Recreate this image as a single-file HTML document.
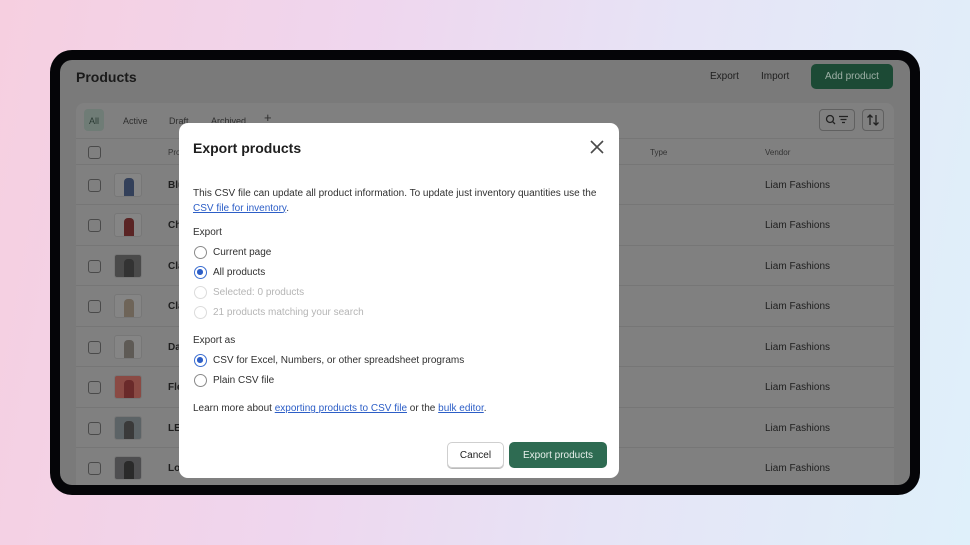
<!DOCTYPE html>
<html><head><meta charset="utf-8"><style>
*{box-sizing:border-box;margin:0;padding:0}
body{width:970px;height:545px;overflow:hidden;font-family:"Liberation Sans",sans-serif;background:linear-gradient(100deg,#f6cfe0 0%,#efd6ee 35%,#e6e4f6 65%,#dff0fa 100%);position:relative}
.frame{position:absolute;left:50px;top:50px;width:870px;height:445px;background:#050508;border-radius:22px}
.screen{position:absolute;left:60px;top:60px;width:850px;height:425px;background:#7a7a7a;border-radius:12px;overflow:hidden}
.abs{position:absolute}
.card{position:absolute;left:16px;top:43px;width:818px;height:400px;background:#808080;border-radius:8px}
.row{position:absolute;left:0;width:818px;border-top:1px solid #767676}
.cb{position:absolute;left:12px;width:13px;height:13px;border:1.3px solid #4a4a4a;border-radius:3px}
.th{position:absolute;left:38px;width:28px;height:24px;border-radius:3px;border:1px solid #777;background:#858585;overflow:hidden}
.th i{position:absolute;left:9px;top:4px;width:10px;height:18px;border-radius:4px 4px 0 0}
.txt{font-size:10px;color:#1e1e1e}
.tab{position:absolute;top:13px;font-size:9px;color:#2e2e2e}
.modal{position:absolute;left:179px;top:123px;width:440px;height:355px;background:#fff;border-radius:9px;color:#303030;font-size:10px}
.radio{position:absolute;left:15px;width:13px;height:13px;border:1.3px solid #8a8a8a;border-radius:50%}
.radio.on{border:1.3px solid #3b6ed1}
.radio.on::after{content:"";position:absolute;left:2.4px;top:2.4px;width:5.6px;height:5.6px;border-radius:50%;background:#2c5ec7}
.radio.dis{border-color:#dcdcdc}
.lab{position:absolute;left:34px;font-size:10px}
a{color:#2c5ec7;text-decoration:underline}
.btn{position:absolute;display:flex;align-items:center;justify-content:center;border-radius:5px}
</style></head><body>
<div class="frame"></div>
<div class="screen">
  <div class="abs" style="left:16px;top:9px;font-size:14px;font-weight:bold;color:#1a1a1a">Products</div>
  <div class="abs txt" style="left:650px;top:11px">Export</div>
  <div class="abs txt" style="left:701px;top:11px">Import</div>
  <div class="btn" style="left:751px;top:4px;width:82px;height:25px;background:#1c4a35;color:#9fb0a7;font-size:10px">Add product</div>
  <div class="card">
    <div class="abs" style="left:8px;top:6px;width:20px;height:22px;background:#6f7c76;border-radius:4px"></div>
    <div class="tab" style="left:13px;color:#2a3a33">All</div>
    <div class="tab" style="left:47px">Active</div>
    <div class="tab" style="left:93px">Draft</div>
    <div class="tab" style="left:135px">Archived</div>
    <div class="abs" style="left:188px;top:7px;font-size:13px;color:#2e2e2e">+</div>
    <div class="abs" style="left:743px;top:6px;width:36px;height:22px;border:1px solid #606060;border-radius:4px">
      <svg width="34" height="20" viewBox="0 0 34 20"><circle cx="10" cy="9" r="3.5" fill="none" stroke="#222" stroke-width="1.3"/><path d="M12.6 11.6L15 14M19 6.5h9M20.5 9.5h6M22 12.5h3" stroke="#222" stroke-width="1.3"/></svg></div>
    <div class="abs" style="left:786px;top:6px;width:22px;height:22px;border:1px solid #606060;border-radius:4px">
      <svg width="20" height="20" viewBox="0 0 20 20"><path d="M7 15V5M4.5 7.5L7 5l2.5 2.5M13 5v10M10.5 12.5L13 15l2.5-2.5" stroke="#222" stroke-width="1.3" fill="none"/></svg></div>
    <div class="row" style="top:35px;height:27px"><div class="cb" style="top:7px"></div><div class="abs" style="left:92px;top:9px;font-size:8px;color:#333">Product</div><div class="abs" style="left:574px;top:9px;font-size:8px;color:#333">Type</div><div class="abs" style="left:689px;top:9px;font-size:8px;color:#333">Vendor</div></div>
    <div class="row" style="top:61px;height:41px"><div class="cb" style="top:14px"></div><div class="th" style="top:8px"><i style="background:#33405a"></i></div><div class="abs txt" style="left:92px;top:15px;font-weight:bold">Blue</div><div class="abs txt" style="left:689px;top:15px">Liam Fashions</div></div>
    <div class="row" style="top:101px;height:41px"><div class="cb" style="top:14px"></div><div class="th" style="top:8px"><i style="background:#5a2424"></i></div><div class="abs txt" style="left:92px;top:15px;font-weight:bold">Che</div><div class="abs txt" style="left:689px;top:15px">Liam Fashions</div></div>
    <div class="row" style="top:142px;height:41px"><div class="cb" style="top:14px"></div><div class="th" style="top:8px;background:#4a4a4a"><i style="background:#333"></i></div><div class="abs txt" style="left:92px;top:15px;font-weight:bold">Cla</div><div class="abs txt" style="left:689px;top:15px">Liam Fashions</div></div>
    <div class="row" style="top:182px;height:41px"><div class="cb" style="top:14px"></div><div class="th" style="top:8px"><i style="background:#6e6458"></i></div><div class="abs txt" style="left:92px;top:15px;font-weight:bold">Cla</div><div class="abs txt" style="left:689px;top:15px">Liam Fashions</div></div>
    <div class="row" style="top:223px;height:41px"><div class="cb" style="top:14px"></div><div class="th" style="top:8px"><i style="background:#5e5a55"></i></div><div class="abs txt" style="left:92px;top:15px;font-weight:bold">Dar</div><div class="abs txt" style="left:689px;top:15px">Liam Fashions</div></div>
    <div class="row" style="top:263px;height:41px"><div class="cb" style="top:14px"></div><div class="th" style="top:8px;background:#8a4a44"><i style="background:#6a2a2a"></i></div><div class="abs txt" style="left:92px;top:15px;font-weight:bold">Fle</div><div class="abs txt" style="left:689px;top:15px">Liam Fashions</div></div>
    <div class="row" style="top:304px;height:41px"><div class="cb" style="top:14px"></div><div class="th" style="top:8px;background:#5c6366"><i style="background:#3a3a3a"></i></div><div class="abs txt" style="left:92px;top:15px;font-weight:bold">LE</div><div class="abs txt" style="left:689px;top:15px">Liam Fashions</div></div>
    <div class="row" style="top:344px;height:41px"><div class="cb" style="top:14px"></div><div class="th" style="top:8px;background:#4e4e50"><i style="background:#2a2a2a"></i></div><div class="abs txt" style="left:92px;top:15px;font-weight:bold">Lo</div><div class="abs txt" style="left:689px;top:15px">Liam Fashions</div></div>
  </div>
</div>
<div class="modal">
  <div class="abs" style="left:14px;top:17px;font-size:14px;font-weight:bold;color:#1e1e1e">Export products</div>
  <svg class="abs" style="left:411px;top:17px" width="14" height="14" viewBox="0 0 14 14"><path d="M1 1L13 13M13 1L1 13" stroke="#4a4a4a" stroke-width="1.6"/></svg>
  <div class="abs" style="left:14px;top:64px;width:415px;line-height:14.5px">This CSV file can update all product information. To update just inventory quantities use the <a>CSV file for inventory</a>.</div>
  <div class="abs" style="left:14px;top:104px">Export</div>
  <div class="radio" style="top:123px"></div><div class="lab" style="top:124px">Current page</div>
  <div class="radio on" style="top:143px"></div><div class="lab" style="top:144px">All products</div>
  <div class="radio dis" style="top:163px"></div><div class="lab" style="top:164px;color:#b5b5b5">Selected: 0 products</div>
  <div class="radio dis" style="top:183px"></div><div class="lab" style="top:184px;color:#b5b5b5">21 products matching your search</div>
  <div class="abs" style="left:14px;top:212px">Export as</div>
  <div class="radio on" style="top:231px"></div><div class="lab" style="top:232px">CSV for Excel, Numbers, or other spreadsheet programs</div>
  <div class="radio" style="top:251px"></div><div class="lab" style="top:252px">Plain CSV file</div>
  <div class="abs" style="left:14px;top:280px">Learn more about <a>exporting products to CSV file</a> or the <a>bulk editor</a>.</div>
  <div class="btn" style="left:268px;top:319px;width:57px;height:26px;border:1px solid #cfcfcf;color:#222;box-shadow:0 1px 0 #bbb">Cancel</div>
  <div class="btn" style="left:330px;top:319px;width:98px;height:26px;background:#2e6b52;color:#e8f0ec">Export products</div>
</div>
</body></html>
